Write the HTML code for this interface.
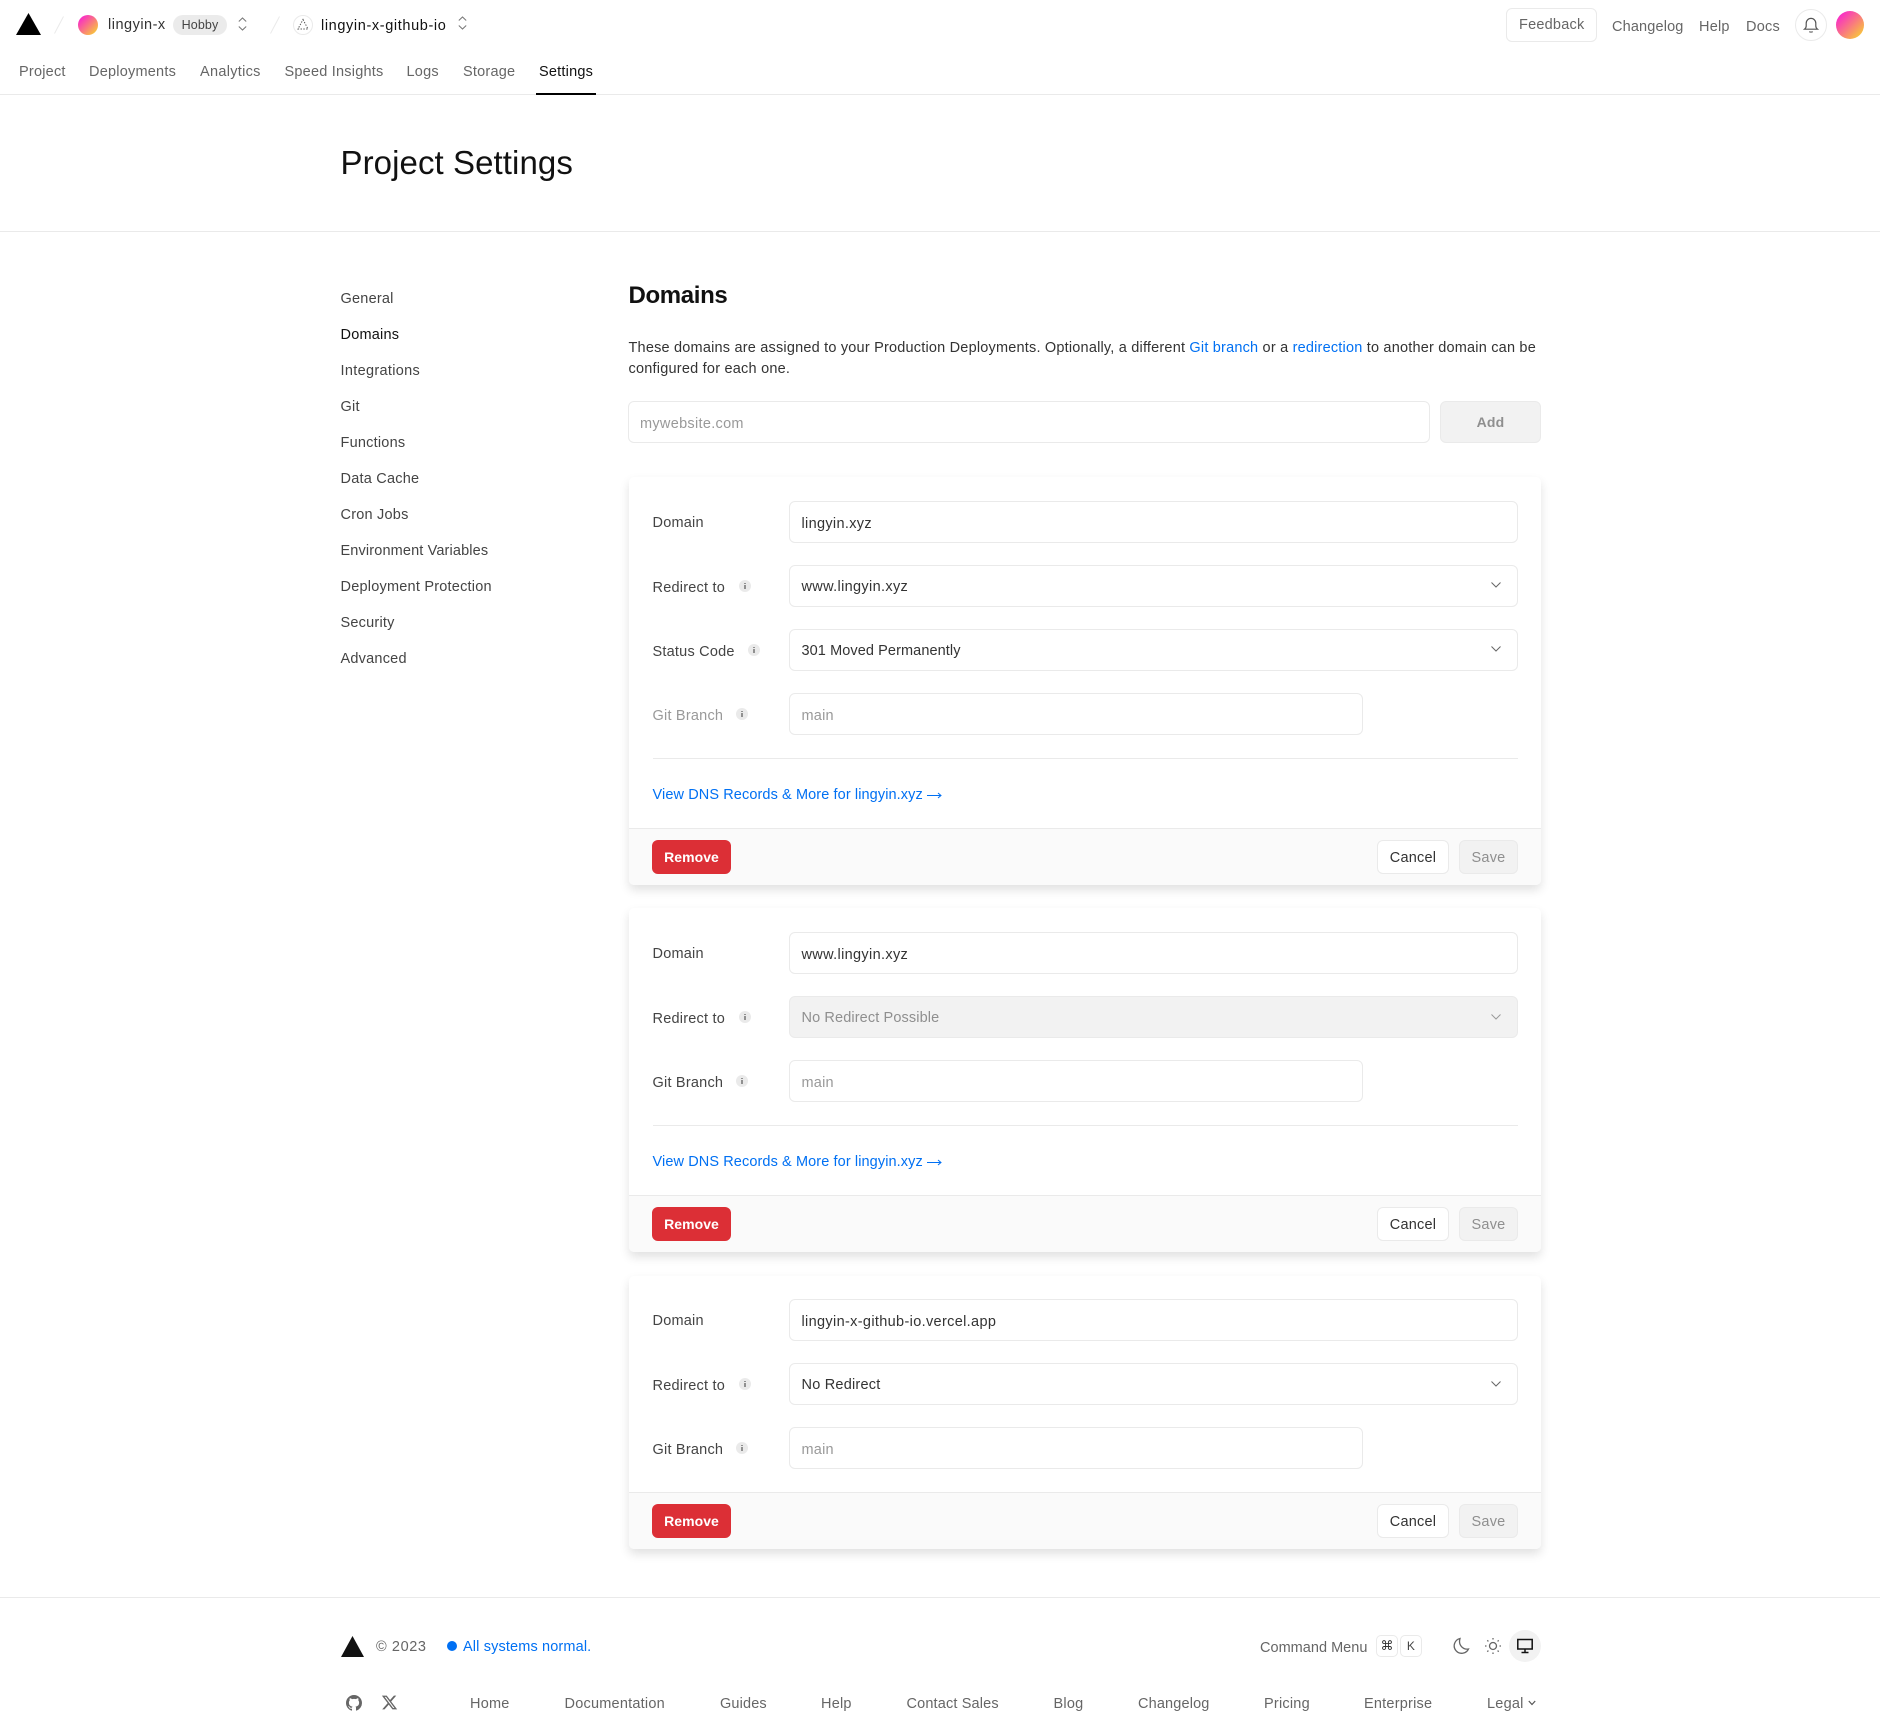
<!DOCTYPE html>
<html><head><meta charset="utf-8"><title>Project Settings</title>
<style>
html,body{margin:0;padding:0;background:#fff}
body{position:relative;width:1880px;height:1734px;overflow:hidden;font-family:"Liberation Sans",sans-serif;font-size:14.5px;letter-spacing:.22px;color:#666}
.t{position:absolute;white-space:nowrap;line-height:20px;height:20px;margin-top:1px}
.b{position:absolute;box-sizing:border-box}
.i{position:absolute;box-sizing:border-box;border:1px solid #eaeaea;border-radius:6px;background:#fff;height:42px}
.l{color:#444}.v{color:#333}.p{color:#999}.g{color:#8f8f8f}
.bl{color:#0070f3}
.dns{letter-spacing:.1px}
.line{position:absolute;height:1px;background:#eaeaea}
.card{position:absolute;left:629px;width:912px;background:#fff;border-radius:5px;box-shadow:0 5px 10px rgba(0,0,0,.12)}
.foot{position:absolute;left:0;right:0;bottom:0;height:57px;background:#fafafa;border-top:1px solid #eaeaea;border-radius:0 0 5px 5px;box-sizing:border-box}
.btn{position:absolute;box-sizing:border-box;height:34px;line-height:34px;border-radius:6px;text-align:center}
.rm{background:#dc2f36;color:#fff;font-weight:700;left:652px;width:79px;line-height:34px;font-size:14px;letter-spacing:.05px}
.cn{background:#fff;border:1px solid #eaeaea;color:#333;left:1377px;width:72px}
.sv{background:#f2f2f2;border:1px solid #eaeaea;color:#8f8f8f;left:1459px;width:59px}
svg{position:absolute;display:block}
</style></head><body>

<!-- header -->
<svg style="left:16px;top:13px" width="25" height="22" viewBox="0 0 25 22"><path d="M12.5 0L25 22H0z" fill="#000"/></svg>
<svg style="left:54px;top:16px" width="10" height="18" viewBox="0 0 10 18"><path d="M9.500.5L.5 17.500" stroke="#eaeaea" fill="none"/></svg>
<div class="b" style="left:78px;top:15px;width:20px;height:20px;border-radius:50%;background:linear-gradient(135deg,#f92fc4 15%,#f97f7a 55%,#f8d42e 95%)"></div>
<div class="t" style="left:108px;top:14px;color:#333;letter-spacing:.5px">lingyin-x</div>
<div class="b" style="left:173px;top:15px;width:54px;height:20px;border-radius:10px;background:#ebebeb;color:#444;font-size:12.5px;line-height:20px;text-align:center;letter-spacing:.1px">Hobby</div>
<svg style="left:237px;top:16px" width="11" height="17" viewBox="0 0 11 17"><path d="M1.800 5.500L5.500 2 9.200 5.500M1.800 10.500L5.500 14 9.200 10.500" stroke="#777" fill="none"/></svg>
<svg style="left:270px;top:16px" width="10" height="18" viewBox="0 0 10 18"><path d="M9.500.5L.5 17.500" stroke="#eaeaea" fill="none"/></svg>
<div class="b" style="left:293px;top:15px;width:20px;height:20px;border-radius:50%;border:1px solid #eaeaea"></div>
<svg style="left:297px;top:18px" width="12" height="13" viewBox="0 0 12 13"><path d="M6 1.500L11 11H1z" stroke="#555" fill="none" stroke-dasharray="1.400 1.400"/></svg>
<div class="t" style="left:321px;top:15px;color:#111;letter-spacing:.62px">lingyin-x-github-io</div>
<svg style="left:457px;top:15px" width="11" height="17" viewBox="0 0 11 17"><path d="M1.800 5.500L5.500 2 9.200 5.500M1.800 10.500L5.500 14 9.200 10.500" stroke="#777" fill="none"/></svg>

<div class="b" style="left:1506px;top:8px;width:91px;height:34px;border:1px solid #eaeaea;border-radius:6px"></div>
<div class="t" style="left:1519px;top:14px">Feedback</div>
<div class="t" style="left:1612px;top:16px;letter-spacing:.15px">Changelog</div>
<div class="t" style="left:1699px;top:16px">Help</div>
<div class="t" style="left:1746px;top:16px">Docs</div>
<div class="b" style="left:1795px;top:9px;width:32px;height:32px;border:1px solid #eaeaea;border-radius:50%"></div>
<svg style="left:1803px;top:17px" width="16" height="16" viewBox="0 0 16 16"><path d="M1.500 12.200h13c-1-.8-1.700-1.600-1.700-3.200V6.200a4.800 4.800 0 0 0-9.600 0V9c0 1.600-.7 2.400-1.700 3.200zM6.300 14.600c.9.6 2.500.6 3.400 0" stroke="#555" stroke-width="1.200" fill="none"/></svg>
<div class="b" style="left:1836px;top:11px;width:28px;height:28px;border-radius:50%;background:linear-gradient(135deg,#f92fc4 15%,#f97f7a 55%,#f8d42e 95%)"></div>

<div class="t" style="left:19px;top:61px">Project</div>
<div class="t" style="left:89px;top:61px">Deployments</div>
<div class="t" style="left:200px;top:61px;letter-spacing:.3px">Analytics</div>
<div class="t" style="left:284.500px;top:61px">Speed Insights</div>
<div class="t" style="left:406.500px;top:61px">Logs</div>
<div class="t" style="left:463px;top:61px">Storage</div>
<div class="t" style="left:539px;top:61px;color:#111">Settings</div>
<div class="line" style="left:0;top:94px;width:1880px"></div>
<div class="b" style="left:536px;top:93px;width:60px;height:2px;background:#000"></div>

<div class="t" style="left:340.500px;top:142px;height:40px;line-height:40px;font-size:33px;color:#111;letter-spacing:.08px">Project Settings</div>
<div class="line" style="left:0;top:231px;width:1880px"></div>

<!-- side nav -->
<div class="t l" style="left:340.500px;top:288px">General</div>
<div class="t" style="left:340.500px;top:324px;color:#111">Domains</div>
<div class="t l" style="left:340.500px;top:360px;letter-spacing:.32px">Integrations</div>
<div class="t l" style="left:340.500px;top:396px">Git</div>
<div class="t l" style="left:340.500px;top:432px">Functions</div>
<div class="t l" style="left:340.500px;top:468px">Data Cache</div>
<div class="t l" style="left:340.500px;top:504px">Cron Jobs</div>
<div class="t l" style="left:340.500px;top:540px;letter-spacing:.14px">Environment Variables</div>
<div class="t l" style="left:340.500px;top:576px">Deployment Protection</div>
<div class="t l" style="left:340.500px;top:612px">Security</div>
<div class="t l" style="left:340.500px;top:648px">Advanced</div>

<!-- main -->
<div class="t" style="left:628.500px;top:280px;height:30px;line-height:30px;font-size:24px;font-weight:700;color:#111;letter-spacing:-.35px">Domains</div>
<div class="t" style="left:628.500px;top:337px;color:#333;letter-spacing:.2px">These domains are assigned to your Production Deployments. Optionally, a different <span class="bl">Git branch</span> or a <span class="bl">redirection</span> to another domain can be</div>
<div class="t" style="left:628.500px;top:358px;color:#333">configured for each one.</div>
<div class="i" style="left:628px;top:401px;width:802px"></div>
<div class="t p" style="left:640px;top:413px;letter-spacing:.3px">mywebsite.com</div>
<div class="btn" style="left:1440px;top:401px;width:101px;height:42px;line-height:40px;background:#f2f2f2;border:1px solid #eaeaea;color:#8f8f8f;font-weight:700;font-size:14px">Add</div>

<!-- card 1 -->
<div class="card" style="top:477px;height:408px"><div class="foot"></div></div>
<div class="t l" style="left:652.500px;top:512px">Domain</div>
<div class="i" style="left:789px;top:501px;width:729px"></div>
<div class="t v" style="left:801.500px;top:513px;letter-spacing:.32px">lingyin.xyz</div>

<div class="t l" style="left:652.500px;top:577px">Redirect to</div>
<svg style="left:739px;top:580px" width="12" height="12" viewBox="0 0 12 12"><circle cx="6" cy="6" r="6" fill="#eaeaea"/><path d="M6 5v4M6 3v1" stroke="#555" stroke-width="1.200"/></svg>
<div class="i" style="left:789px;top:565px;width:729px"></div>
<div class="t v" style="left:801.500px;top:576px;letter-spacing:.34px">www.lingyin.xyz</div>
<svg style="left:1491px;top:582px" width="10" height="6" viewBox="0 0 10 6"><path d="M.5.5L5 5 9.500 .5" stroke="#666" fill="none"/></svg>

<div class="t l" style="left:652.500px;top:641px">Status Code</div>
<svg style="left:748px;top:644px" width="12" height="12" viewBox="0 0 12 12"><circle cx="6" cy="6" r="6" fill="#eaeaea"/><path d="M6 5v4M6 3v1" stroke="#555" stroke-width="1.200"/></svg>
<div class="i" style="left:789px;top:629px;width:729px"></div>
<div class="t v" style="left:801.500px;top:640px;letter-spacing:.09px">301 Moved Permanently</div>
<svg style="left:1491px;top:646px" width="10" height="6" viewBox="0 0 10 6"><path d="M.5.5L5 5 9.500 .5" stroke="#666" fill="none"/></svg>

<div class="t p" style="left:652.500px;top:705px">Git Branch</div>
<svg style="left:736px;top:708px" width="12" height="12" viewBox="0 0 12 12"><circle cx="6" cy="6" r="6" fill="#eaeaea"/><path d="M6 5v4M6 3v1" stroke="#555" stroke-width="1.200"/></svg>
<div class="i" style="left:789px;top:693px;width:574px"></div>
<div class="t p" style="left:801.500px;top:705px">main</div>
<div class="line" style="left:653px;top:758px;width:865px"></div>
<div class="t bl dns" style="left:652.500px;top:784px">View DNS Records &amp; More for lingyin.xyz</div>
<svg style="left:927px;top:791px" width="15" height="9" viewBox="0 0 15 9"><path d="M0 4.500H14M11 2l3 2.500-3 2.500" stroke="#0070f3" fill="none"/></svg>
<div class="btn rm" style="top:840px">Remove</div>
<div class="btn cn" style="top:840px">Cancel</div>
<div class="btn sv" style="top:840px">Save</div>

<!-- card 2 -->
<div class="card" style="top:908px;height:344px"><div class="foot"></div></div>
<div class="t l" style="left:652.500px;top:943px">Domain</div>
<div class="i" style="left:789px;top:932px;width:729px"></div>
<div class="t v" style="left:801.500px;top:944px;letter-spacing:.34px">www.lingyin.xyz</div>

<div class="t l" style="left:652.500px;top:1008px">Redirect to</div>
<svg style="left:739px;top:1011px" width="12" height="12" viewBox="0 0 12 12"><circle cx="6" cy="6" r="6" fill="#eaeaea"/><path d="M6 5v4M6 3v1" stroke="#555" stroke-width="1.200"/></svg>
<div class="i" style="left:789px;top:996px;width:729px;background:#f2f2f2"></div>
<div class="t g" style="left:801.500px;top:1007px;letter-spacing:.12px">No Redirect Possible</div>
<svg style="left:1491px;top:1014px" width="10" height="6" viewBox="0 0 10 6"><path d="M.5.5L5 5 9.500 .5" stroke="#999" fill="none"/></svg>

<div class="t l" style="left:652.500px;top:1072px">Git Branch</div>
<svg style="left:736px;top:1075px" width="12" height="12" viewBox="0 0 12 12"><circle cx="6" cy="6" r="6" fill="#eaeaea"/><path d="M6 5v4M6 3v1" stroke="#555" stroke-width="1.200"/></svg>
<div class="i" style="left:789px;top:1060px;width:574px"></div>
<div class="t p" style="left:801.500px;top:1072px">main</div>
<div class="line" style="left:653px;top:1125px;width:865px"></div>
<div class="t bl dns" style="left:652.500px;top:1151px">View DNS Records &amp; More for lingyin.xyz</div>
<svg style="left:927px;top:1158px" width="15" height="9" viewBox="0 0 15 9"><path d="M0 4.500H14M11 2l3 2.500-3 2.500" stroke="#0070f3" fill="none"/></svg>
<div class="btn rm" style="top:1207px">Remove</div>
<div class="btn cn" style="top:1207px">Cancel</div>
<div class="btn sv" style="top:1207px">Save</div>

<!-- card 3 -->
<div class="card" style="top:1276px;height:273px"><div class="foot"></div></div>
<div class="t l" style="left:652.500px;top:1310px">Domain</div>
<div class="i" style="left:789px;top:1299px;width:729px"></div>
<div class="t v" style="left:801.500px;top:1311px;letter-spacing:.34px">lingyin-x-github-io.vercel.app</div>

<div class="t l" style="left:652.500px;top:1375px">Redirect to</div>
<svg style="left:739px;top:1378px" width="12" height="12" viewBox="0 0 12 12"><circle cx="6" cy="6" r="6" fill="#eaeaea"/><path d="M6 5v4M6 3v1" stroke="#555" stroke-width="1.200"/></svg>
<div class="i" style="left:789px;top:1363px;width:729px"></div>
<div class="t v" style="left:801.500px;top:1374px">No Redirect</div>
<svg style="left:1491px;top:1381px" width="10" height="6" viewBox="0 0 10 6"><path d="M.5.5L5 5 9.500 .5" stroke="#666" fill="none"/></svg>

<div class="t l" style="left:652.500px;top:1439px">Git Branch</div>
<svg style="left:736px;top:1442px" width="12" height="12" viewBox="0 0 12 12"><circle cx="6" cy="6" r="6" fill="#eaeaea"/><path d="M6 5v4M6 3v1" stroke="#555" stroke-width="1.200"/></svg>
<div class="i" style="left:789px;top:1427px;width:574px"></div>
<div class="t p" style="left:801.500px;top:1439px">main</div>
<div class="btn rm" style="top:1504px">Remove</div>
<div class="btn cn" style="top:1504px">Cancel</div>
<div class="btn sv" style="top:1504px">Save</div>

<!-- footer -->
<div class="line" style="left:0;top:1597px;width:1880px"></div>
<svg style="left:341px;top:1636px" width="23" height="21" viewBox="0 0 23 21"><path d="M11.500 0L23 21H0z" fill="#111"/></svg>
<div class="t" style="left:376px;top:1636px;letter-spacing:.6px">© 2023</div>
<div class="b" style="left:447px;top:1641px;width:10px;height:10px;border-radius:50%;background:#0070f3"></div>
<div class="t bl" style="left:463px;top:1636px;letter-spacing:.14px">All systems normal.</div>

<div class="t" style="left:1260px;top:1637px;letter-spacing:.02px">Command Menu</div>
<div class="b" style="left:1376px;top:1635px;width:22px;height:22px;border:1px solid #eaeaea;border-radius:5px;text-align:center;line-height:21px;color:#333;font-size:13px;letter-spacing:0;font-family:'DejaVu Sans',sans-serif">⌘</div>
<div class="b" style="left:1400px;top:1635px;width:22px;height:22px;border:1px solid #eaeaea;border-radius:5px;text-align:center;line-height:20px;color:#444;font-size:12px">K</div>
<svg style="left:1452px;top:1637px" width="18" height="18" viewBox="0 0 18 18"><path d="M8 1.500a7.500 7.500 0 1 0 8.500 10.500C11 13 6 8 8 1.500z" stroke="#666" stroke-width="1.300" fill="none"/></svg>
<svg style="left:1484px;top:1637px" width="18" height="18" viewBox="0 0 18 18"><circle cx="9" cy="9" r="3.500" stroke="#666" stroke-width="1.300" fill="none"/><path d="M9 1v1.500M9 15.500V17M1 9h1.500M15.500 9H17M3.300 3.300l1.100 1.100M13.600 13.600l1.100 1.100M3.300 14.700l1.100-1.100M13.600 4.400l1.100-1.100" stroke="#666" stroke-width="1.300" fill="none"/></svg>
<div class="b" style="left:1509px;top:1630px;width:32px;height:32px;border-radius:50%;background:#f2f2f2"></div>
<svg style="left:1517px;top:1638px" width="16" height="16" viewBox="0 0 16 16"><path d="M.800 1.500h14.400v9.500H.800zM8 11v3M4.500 14.500h7" stroke="#111" stroke-width="1.500" fill="none"/></svg>

<svg style="left:346px;top:1695px" width="16" height="16" viewBox="0 0 16 16"><path fill="#666" d="M8 0C3.580 0 0 3.580 0 8c0 3.540 2.290 6.530 5.470 7.590.4.070.55-.17.55-.38 0-.19-.01-.82-.01-1.490-2.010.37-2.530-.49-2.690-.94-.09-.23-.48-.94-.82-1.130-.28-.15-.68-.52-.01-.53.63-.01 1.080.58 1.230.82.720 1.210 1.870.87 2.330.66.070-.52.28-.87.51-1.070-1.780-.2-3.640-.89-3.640-3.950 0-.87.31-1.590.82-2.150-.08-.2-.36-1.020.08-2.120 0 0 .67-.21 2.200.82.64-.18 1.320-.27 2-.27.68 0 1.360.09 2 .27 1.530-1.040 2.200-.82 2.200-.82.44 1.100.16 1.920.08 2.120.51.56.82 1.270.82 2.150 0 3.070-1.870 3.750-3.650 3.950.29.25.54.73.54 1.480 0 1.070-.01 1.930-.01 2.200 0 .21.15.46.55.38A8.013 8.013 0 0016 8c0-4.420-3.580-8-8-8z"/></svg>
<svg style="left:381px;top:1694px" width="17" height="17" viewBox="0 0 24 24"><path fill="#666" d="M18.244 2.250h3.308l-7.227 8.260 8.502 11.240H16.170l-5.214-6.817L4.990 21.750H1.680l7.730-8.835L1.254 2.250H8.080l4.713 6.231zm-1.161 17.520h1.833L7.084 4.126H5.117z"/></svg>

<div class="t" style="left:470px;top:1693px">Home</div>
<div class="t" style="left:564.500px;top:1693px">Documentation</div>
<div class="t" style="left:720px;top:1693px;letter-spacing:.14px">Guides</div>
<div class="t" style="left:821px;top:1693px">Help</div>
<div class="t" style="left:906.500px;top:1693px;letter-spacing:.15px">Contact Sales</div>
<div class="t" style="left:1053.500px;top:1693px">Blog</div>
<div class="t" style="left:1138px;top:1693px;letter-spacing:.15px">Changelog</div>
<div class="t" style="left:1264px;top:1693px">Pricing</div>
<div class="t" style="left:1364px;top:1693px">Enterprise</div>
<div class="t" style="left:1487px;top:1693px">Legal</div>
<svg style="left:1528px;top:1700px" width="8" height="6" viewBox="0 0 8 6"><path d="M.800 1L4 4.500 7.200 1" stroke="#555" stroke-width="1.200" fill="none"/></svg>
</body></html>
